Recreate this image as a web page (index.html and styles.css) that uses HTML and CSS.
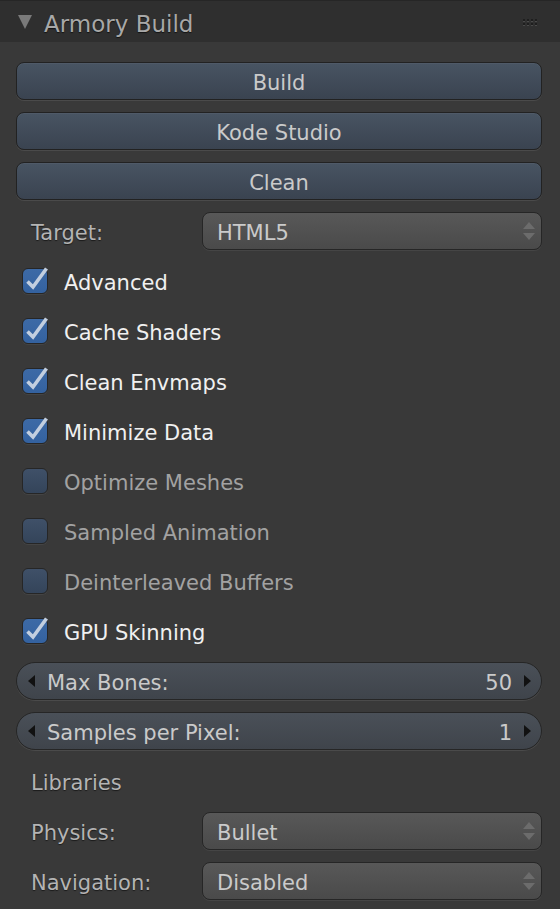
FILE: index.html
```html
<!DOCTYPE html>
<html>
<head>
<meta charset="utf-8">
<link rel="stylesheet" href="styles.css">
</head>
<body>
<div class="panel">
  <div class="header">
    <span class="tri"></span>
    <span class="title">Armory Build</span>
    <span class="grip">
      <svg width="14" height="8" viewBox="0 0 14 8">
        <g fill="#1e1e1e">
          <rect x="0" y="0" width="2" height="2"/><rect x="4" y="0" width="2" height="2"/><rect x="8" y="0" width="2" height="2"/><rect x="12" y="0" width="2" height="2"/>
          <rect x="0" y="4" width="2" height="2"/><rect x="4" y="4" width="2" height="2"/><rect x="8" y="4" width="2" height="2"/><rect x="12" y="4" width="2" height="2"/>
        </g>
        <g fill="#4a4a4a">
          <rect x="0" y="2" width="2" height="1"/><rect x="4" y="2" width="2" height="1"/><rect x="8" y="2" width="2" height="1"/><rect x="12" y="2" width="2" height="1"/>
          <rect x="0" y="6" width="2" height="1"/><rect x="4" y="6" width="2" height="1"/><rect x="8" y="6" width="2" height="1"/><rect x="12" y="6" width="2" height="1"/>
        </g>
      </svg>
    </span>
  </div>
  <div class="body">
    <div class="btn">Build</div>
    <div class="btn">Kode Studio</div>
    <div class="btn">Clean</div>

    <div class="prop">
      <span class="label">Target:</span>
      <div class="menu"><span>HTML5</span><span class="updown"></span></div>
    </div>

    <div class="check on"><span class="box"><svg class="tick" viewBox="0 0 26 26" width="26" height="26"><path d="M5.5 13.5 L11 19 L24.5 0.5"/></svg></span><span class="ctext">Advanced</span></div>
    <div class="check on"><span class="box"><svg class="tick" viewBox="0 0 26 26" width="26" height="26"><path d="M5.5 13.5 L11 19 L24.5 0.5"/></svg></span><span class="ctext">Cache Shaders</span></div>
    <div class="check on"><span class="box"><svg class="tick" viewBox="0 0 26 26" width="26" height="26"><path d="M5.5 13.5 L11 19 L24.5 0.5"/></svg></span><span class="ctext">Clean Envmaps</span></div>
    <div class="check on"><span class="box"><svg class="tick" viewBox="0 0 26 26" width="26" height="26"><path d="M5.5 13.5 L11 19 L24.5 0.5"/></svg></span><span class="ctext">Minimize Data</span></div>
    <div class="check"><span class="box"></span><span class="ctext">Optimize Meshes</span></div>
    <div class="check"><span class="box"></span><span class="ctext">Sampled Animation</span></div>
    <div class="check"><span class="box"></span><span class="ctext">Deinterleaved Buffers</span></div>
    <div class="check on"><span class="box"><svg class="tick" viewBox="0 0 26 26" width="26" height="26"><path d="M5.5 13.5 L11 19 L24.5 0.5"/></svg></span><span class="ctext">GPU Skinning</span></div>

    <div class="num"><span class="arr left"></span><span class="nlabel">Max Bones:</span><span class="nval">50</span><span class="arr right"></span></div>
    <div class="num"><span class="arr left"></span><span class="nlabel">Samples per Pixel:</span><span class="nval">1</span><span class="arr right"></span></div>

    <div class="section"><span class="label">Libraries</span></div>

    <div class="prop">
      <span class="label">Physics:</span>
      <div class="menu"><span>Bullet</span><span class="updown"></span></div>
    </div>
    <div class="prop">
      <span class="label">Navigation:</span>
      <div class="menu"><span>Disabled</span><span class="updown"></span></div>
    </div>
  </div>
</div>
</body>
</html>
```

FILE: styles.css
```css
html, body {
  margin: 0;
  padding: 0;
  background: #393939;
  font-family: "DejaVu Sans", "Liberation Sans", sans-serif;
}

.panel {
  width: 560px;
  height: 909px;
  background: #393939;
  overflow: hidden;
}

.header {
  height: 42px;
  box-sizing: border-box;
  border-top: 1px solid #262626;
  background: #2f2f2f;
  display: flex;
  align-items: center;
  padding-left: 18px;
  padding-right: 23px;
  padding-top: 5px;
}

.tri {
  width: 0;
  height: 0;
  border-left: 7px solid transparent;
  border-right: 7px solid transparent;
  border-top: 14px solid #7a7a7a;
  margin-top: -4px;
}

.title {
  margin-left: 12px;
  font-size: 23px;
  color: #a8a8a8;
  text-shadow: 0 1px 1px rgba(0,0,0,0.6);
  flex: 1;
  line-height: 1;
}

.grip {
  display: flex;
  margin-top: -2px;
}

.body {
  display: flex;
  flex-direction: column;
  gap: 12px;
  padding: 20px 18px 0 16px;
}

.btn {
  height: 38px;
  box-sizing: border-box;
  border: 1px solid #222;
  border-radius: 8px;
  background: linear-gradient(#485462, #3a4350);
  box-shadow: 0 1px 0 #4a4a4a, inset 0 1px 0 rgba(255,255,255,0.04);
  color: #cacaca;
  font-size: 21px;
  display: flex;
  align-items: center;
  justify-content: center;
  padding-top: 4px;
}

.prop {
  height: 38px;
  display: grid;
  grid-template-columns: 186px 1fr;
  align-items: center;
}

.label {
  padding-left: 15px;
  padding-top: 4px;
  font-size: 21px;
  color: #b4b4b4;
  text-shadow: 0 1px 1px rgba(0,0,0,0.55);
}

.section {
  height: 38px;
  display: flex;
  align-items: center;
}

.menu {
  height: 38px;
  box-sizing: border-box;
  border: 1px solid #262626;
  border-radius: 8px;
  background: linear-gradient(#585858, #4a4a4a);
  box-shadow: 0 1px 0 #454545;
  color: #cacaca;
  font-size: 21px;
  display: flex;
  align-items: center;
  justify-content: space-between;
  padding-left: 14px;
  padding-right: 6px;
}

.menu > span:first-child {
  padding-top: 4px;
}

.updown {
  width: 12px;
  height: 18px;
  position: relative;
}
.updown::before, .updown::after {
  content: "";
  position: absolute;
  left: 0;
  width: 0;
  height: 0;
  border-left: 6px solid transparent;
  border-right: 6px solid transparent;
}
.updown::before {
  top: 0;
  border-bottom: 7px solid #6c6c6c;
}
.updown::after {
  bottom: 0;
  border-top: 7px solid #6c6c6c;
}

.check {
  height: 38px;
  display: flex;
  align-items: center;
  padding-left: 6px;
}

.box {
  width: 26px;
  height: 26px;
  box-sizing: border-box;
  border: 1px solid #262626;
  border-radius: 6px;
  background: linear-gradient(#3f5068, #34445a);
  box-shadow: 0 1px 0 #444;
  position: relative;
  flex: none;
}

.check.on .box {
  background: linear-gradient(#3d6aa6, #3462a0);
}

.tick {
  position: absolute;
  left: -1px;
  top: -1px;
  overflow: visible;
}
.tick path {
  fill: none;
  stroke: #c3cfe0;
  stroke-width: 3.6;
  stroke-linecap: butt;
  stroke-linejoin: miter;
}

.ctext {
  margin-left: 16px;
  padding-top: 4px;
  font-size: 21px;
  color: #a2a2a2;
}
.check.on .ctext {
  color: #f0f0f0;
}

.num {
  height: 38px;
  box-sizing: border-box;
  border: 1px solid #262626;
  border-radius: 19px;
  background: linear-gradient(#4a5058, #3f444b);
  box-shadow: 0 1px 0 #4a4a4a;
  display: flex;
  align-items: center;
  padding: 0 10px 0 11px;
  font-size: 21px;
  color: #cacaca;
}

.nlabel {
  margin-left: 12px;
  flex: 1;
  padding-top: 4px;
}

.nval {
  margin-right: 12px;
  padding-top: 4px;
}

.arr {
  width: 0;
  height: 0;
  border-top: 6px solid transparent;
  border-bottom: 6px solid transparent;
}
.arr.left {
  border-right: 7px solid #111;
}
.arr.right {
  border-left: 7px solid #111;
}
```
